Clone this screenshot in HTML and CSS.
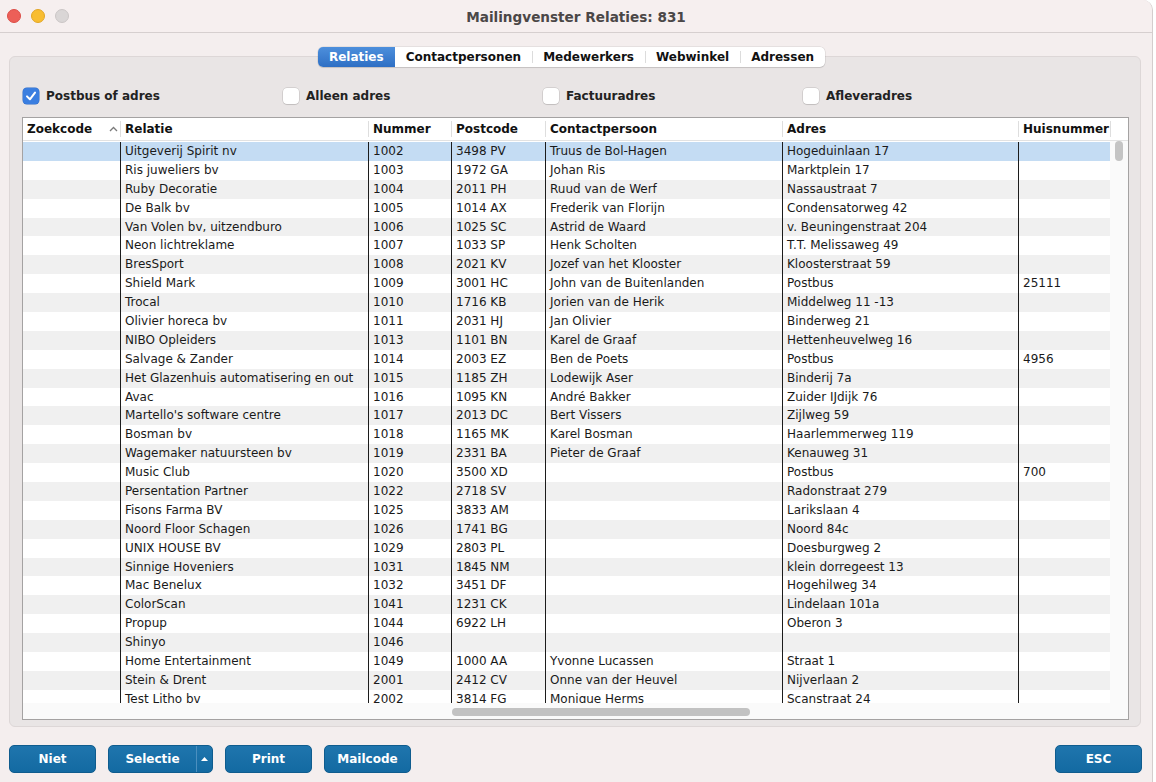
FILE: index.html
```html
<!DOCTYPE html>
<html lang="nl">
<head>
<meta charset="utf-8">
<title>Mailingvenster Relaties: 831</title>
<link rel="stylesheet" href="styles.css">
</head>
<body>
<div class="window">
  <header class="titlebar">
    <div class="lights">
      <span class="light red"></span>
      <span class="light yellow"></span>
      <span class="light grey"></span>
    </div>
    <div class="title">Mailingvenster Relaties: 831</div>
    <div></div>
  </header>

  <div class="content">
    <nav class="tabs">
      <div class="seg">
        <span class="tab active">Relaties</span>
        <span class="tab">Contactpersonen</span>
        <span class="tab sep">Medewerkers</span>
        <span class="tab sep">Webwinkel</span>
        <span class="tab sep">Adressen</span>
      </div>
    </nav>

    <section class="panel">
      <div class="checks">
        <label class="check"><span class="box on"><svg viewBox="0 0 16 16" width="16" height="16"><path d="M4 8.4 L6.9 11.3 L12 4.6" fill="none" stroke="#fff" stroke-width="2" stroke-linecap="round" stroke-linejoin="round"/></svg></span>Postbus of adres</label>
        <label class="check"><span class="box"></span>Alleen adres</label>
        <label class="check"><span class="box"></span>Factuuradres</label>
        <label class="check"><span class="box"></span>Afleveradres</label>
      </div>

      <div class="table">
        <div class="thead">
          <div class="hrow">
            <div class="th first">Zoekcode<svg class="sort" viewBox="0 0 9 6" width="9" height="6"><path d="M1 5 L4.5 1.5 L8 5" fill="none" stroke="#7a7a7a" stroke-width="1.3"/></svg></div>
            <div class="th">Relatie</div>
            <div class="th">Nummer</div>
            <div class="th">Postcode</div>
            <div class="th">Contactpersoon</div>
            <div class="th">Adres</div>
            <div class="th">Huisnummer</div>
          </div>
          <div class="th-corner"></div>
        </div>
        <div class="tbody-wrap">
          <div class="tbody" id="tbody"></div>
          <div class="vscroll"><div class="vthumb"></div></div>
        </div>
        <div class="hscroll"><div class="hthumb"></div></div>
      </div>
    </section>

    <footer class="buttons">
      <button class="btn">Niet</button>
      <div class="btn split"><span class="split-main">Selectie</span><span class="split-arrow"><svg viewBox="0 0 7 4" width="7" height="4"><path d="M0 4 L3.5 0 L7 4Z" fill="#fff"/></svg></span></div>
      <button class="btn">Print</button>
      <button class="btn">Mailcode</button>
      <button class="btn esc">ESC</button>
    </footer>
  </div>
</div>
<script src="script.js"></script>
</body>
</html>
```

FILE: styles.css
```css
* { box-sizing: border-box; }
html, body { margin: 0; padding: 0; }
body {
  background: #ffffff;
  font-family: "DejaVu Sans", "Liberation Sans", sans-serif;
  font-size: 12px;
  color: #1a1a1a;
}
.window {
  width: 1153px;
  height: 782px;
  background: #f4eeee;
  border-right: 1px solid #d4cdcd;
  border-top-right-radius: 10px;
  overflow: hidden;
}
.titlebar {
  height: 33px;
  background: #f6efef;
  border-bottom: 1px solid #d6cfcf;
  display: grid;
  grid-template-columns: 1fr auto 1fr;
  align-items: center;
}
.lights { display: flex; gap: 10px; padding-left: 7px; }
.light { width: 14px; height: 14px; border-radius: 50%; display: block; }
.light.red { background: #ec5f58; border: 1px solid #dc4d47; }
.light.yellow { background: #f8bd31; border: 1px solid #e2a626; }
.light.grey { background: #dad6d6; border: 1px solid #cbc6c6; }
.title {
  font-weight: bold;
  font-size: 13.6px;
  color: #4b4747;
  padding-top: 1px;
}
.content { padding: 0 10px 0 9px; }
.tabs {
  display: flex;
  justify-content: center;
  margin-top: 14px;
  margin-bottom: -11px;
  position: relative;
  z-index: 1;
  padding-right: 8px;
}
.seg {
  display: flex;
  height: 20px;
  background: #ffffff;
  border-radius: 5px;
  box-shadow: 0 0 0 0.5px rgba(0,0,0,0.12), 0 1px 1px rgba(0,0,0,0.10);
}
.tab {
  display: flex;
  align-items: center;
  padding: 0 11px;
  font-weight: bold;
  font-size: 12px;
  color: #111;
}
.tab.sep {
  background: linear-gradient(#dcdcdc, #dcdcdc) no-repeat left center / 1px 12px;
}
.tab.active {
  background: linear-gradient(#4d8fdc, #2e6fc4);
  color: #fff;
  border-radius: 5px 0 0 5px;
}
.panel {
  height: 671px;
  margin-right: 1px;
  background: #e9e5e5;
  border: 1px solid #ddd7d7;
  border-radius: 6px;
  padding: 29px 11px 6px 12px;
}
.checks {
  display: grid;
  grid-template-columns: repeat(4, 260px);
  height: 20px;
  margin: 0 0 11px 1px;
}
.check {
  display: flex;
  align-items: center;
  gap: 7px;
  font-weight: bold;
  font-size: 12px;
  color: #222;
}
.box {
  width: 16px; height: 16px;
  border-radius: 4px;
  background: #fff;
  box-shadow: 0 0 0 0.5px rgba(0,0,0,0.18), 0 1px 1px rgba(0,0,0,0.08);
  display: block;
}
.box.on { background: #3a7ee0; box-shadow: 0 0 0 0.5px #2f6cc6; }
.box svg { display: block; }

.table {
  width: 1107px;
  height: 603px;
  border: 1px solid #a4a2a2;
  background: #ffffff;
  display: flex;
  flex-direction: column;
}
.thead {
  display: flex;
  height: 23px;
  border-bottom: 1px solid #e2e2e2;
  flex: none;
}
.hrow, .row {
  display: grid;
  grid-template-columns: 97px 248px 83px 94px 237px 236px 92px;
  width: 1087px;
}
.th {
  font-weight: bold;
  font-size: 12px;
  padding-left: 5px;
  display: flex;
  align-items: center;
  background: linear-gradient(#dedede, #dedede) no-repeat left center / 1px 16px;
  color: #111;
}
.th.first { background: none; padding-left: 4px; justify-content: space-between; padding-right: 2px; }
.sort { display: block; }
.th-corner {
  width: 18px;
  background: linear-gradient(#dedede, #dedede) no-repeat left center / 1px 16px;
}
.tbody-wrap { display: flex; height: 562px; flex: none; overflow: hidden; }
.tbody { width: 1087px; padding-top: 1px; }
.row { height: 18.9px; }
.row:nth-child(odd) { background: #f0f0f0; }
.row:nth-child(even) { background: #ffffff; }
.row.sel { background: #c4dcf3; }
.td {
  white-space: nowrap;
  overflow: hidden;
  padding-left: 4px;
  line-height: 18.9px;
  border-left: 1px solid #1c1c1c;
  color: #1a1a1a;
}
.td:first-child { border-left: none; }
.vscroll {
  width: 18px;
  background: #fafafa;
  padding: 0 4px 0 5px;
}
.vthumb {
  width: 8px;
  height: 20px;
  border-radius: 4px;
  background: #c4c4c4;
}
.hscroll {
  height: 16px;
  background: #fafafa;
  padding: 5px 0 0 429px;
  flex: none;
}
.hthumb {
  width: 298px;
  height: 8px;
  border-radius: 4px;
  background: #c2c2c2;
}
.buttons {
  display: flex;
  gap: 12px;
  margin-top: 18px;
}
.btn {
  width: 87px;
  height: 28px;
  border: 1px solid #0f5c8e;
  border-radius: 5px;
  background: linear-gradient(#1f75ad, #136aa2);
  color: #fff;
  font-family: inherit;
  font-weight: bold;
  font-size: 12px;
  display: flex;
  align-items: center;
  justify-content: center;
  padding: 0;
}
.btn.split { width: 105px; justify-content: flex-start; }
.split-main { width: 87px; text-align: center; }
.split-arrow {
  flex: 1;
  align-self: stretch;
  display: flex;
  align-items: center;
  justify-content: center;
  border-left: 1px solid #4b8fbf;
}
.split-arrow svg { display: block; }
.btn.esc { margin-left: auto; }
```

FILE: script.js
```js
const rows = [
  ["", "Uitgeverij Spirit nv", "1002", "3498 PV", "Truus de Bol-Hagen", "Hogeduinlaan 17", ""],
  ["", "Ris juweliers bv", "1003", "1972 GA", "Johan Ris", "Marktplein 17", ""],
  ["", "Ruby Decoratie", "1004", "2011 PH", "Ruud van de Werf", "Nassaustraat 7", ""],
  ["", "De Balk bv", "1005", "1014 AX", "Frederik van Florijn", "Condensatorweg 42", ""],
  ["", "Van Volen bv, uitzendburo", "1006", "1025 SC", "Astrid de Waard", "v. Beuningenstraat 204", ""],
  ["", "Neon lichtreklame", "1007", "1033 SP", "Henk Scholten", "T.T. Melissaweg 49", ""],
  ["", "BresSport", "1008", "2021 KV", "Jozef van het Klooster", "Kloosterstraat 59", ""],
  ["", "Shield Mark", "1009", "3001 HC", "John van de Buitenlanden", "Postbus", "25111"],
  ["", "Trocal", "1010", "1716 KB", "Jorien van de Herik", "Middelweg 11 -13", ""],
  ["", "Olivier horeca bv", "1011", "2031 HJ", "Jan Olivier", "Binderweg 21", ""],
  ["", "NIBO Opleiders", "1013", "1101 BN", "Karel de Graaf", "Hettenheuvelweg 16", ""],
  ["", "Salvage & Zander", "1014", "2003 EZ", "Ben de Poets", "Postbus", "4956"],
  ["", "Het Glazenhuis automatisering en out", "1015", "1185 ZH", "Lodewijk Aser", "Binderij 7a", ""],
  ["", "Avac", "1016", "1095 KN", "André Bakker", "Zuider IJdijk 76", ""],
  ["", "Martello's software centre", "1017", "2013 DC", "Bert Vissers", "Zijlweg 59", ""],
  ["", "Bosman bv", "1018", "1165 MK", "Karel Bosman", "Haarlemmerweg 119", ""],
  ["", "Wagemaker natuursteen bv", "1019", "2331 BA", "Pieter de Graaf", "Kenauweg 31", ""],
  ["", "Music Club", "1020", "3500 XD", "", "Postbus", "700"],
  ["", "Persentation Partner", "1022", "2718 SV", "", "Radonstraat 279", ""],
  ["", "Fisons Farma BV", "1025", "3833 AM", "", "Larikslaan 4", ""],
  ["", "Noord Floor Schagen", "1026", "1741 BG", "", "Noord 84c", ""],
  ["", "UNIX HOUSE BV", "1029", "2803 PL", "", "Doesburgweg 2", ""],
  ["", "Sinnige Hoveniers", "1031", "1845 NM", "", "klein dorregeest 13", ""],
  ["", "Mac Benelux", "1032", "3451 DF", "", "Hogehilweg 34", ""],
  ["", "ColorScan", "1041", "1231 CK", "", "Lindelaan 101a", ""],
  ["", "Propup", "1044", "6922 LH", "", "Oberon 3", ""],
  ["", "Shinyo", "1046", "", "", "", ""],
  ["", "Home Entertainment", "1049", "1000 AA", "Yvonne Lucassen", "Straat 1", ""],
  ["", "Stein & Drent", "2001", "2412 CV", "Onne van der Heuvel", "Nijverlaan 2", ""],
  ["", "Test Litho bv", "2002", "3814 FG", "Monique Herms", "Scanstraat 24", ""]
];
const tbody = document.getElementById("tbody");
rows.forEach((r, i) => {
  const row = document.createElement("div");
  row.className = "row" + (i === 0 ? " sel" : "");
  r.forEach(v => {
    const c = document.createElement("div");
    c.className = "td";
    c.textContent = v;
    row.appendChild(c);
  });
  tbody.appendChild(row);
});
```
